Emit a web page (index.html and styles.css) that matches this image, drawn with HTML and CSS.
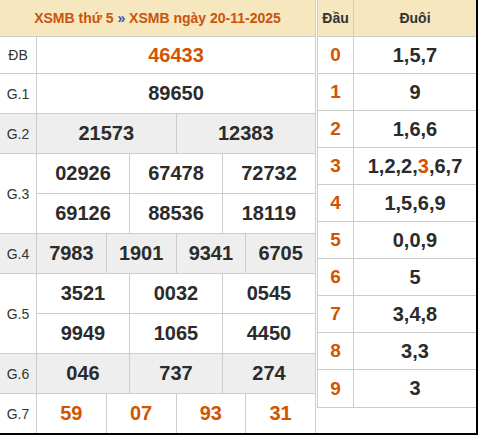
FILE: index.html
```html
<!DOCTYPE html>
<html lang="vi">
<head>
<meta charset="utf-8">
<link rel="stylesheet" href="styles.css">
</head>
<body>
<div class="frame">
  <div class="results">
    <div class="head"><span class="title">XSMB thứ 5 <span class="sep">»</span> XSMB ngày 20-11-2025</span></div>
    <div class="prize p-db">
      <div class="label">ĐB</div>
      <div class="cells c1"><div class="cell red">46433</div></div>
    </div>
    <div class="prize">
      <div class="label">G.1</div>
      <div class="cells c1"><div class="cell">89650</div></div>
    </div>
    <div class="prize alt">
      <div class="label">G.2</div>
      <div class="cells c2"><div class="cell">21573</div><div class="cell">12383</div></div>
    </div>
    <div class="prize">
      <div class="label">G.3</div>
      <div class="cells c3">
        <div class="cell">02926</div><div class="cell">67478</div><div class="cell">72732</div>
        <div class="cell">69126</div><div class="cell">88536</div><div class="cell">18119</div>
      </div>
    </div>
    <div class="prize alt">
      <div class="label">G.4</div>
      <div class="cells c4"><div class="cell">7983</div><div class="cell">1901</div><div class="cell">9341</div><div class="cell">6705</div></div>
    </div>
    <div class="prize">
      <div class="label">G.5</div>
      <div class="cells c3">
        <div class="cell">3521</div><div class="cell">0032</div><div class="cell">0545</div>
        <div class="cell">9949</div><div class="cell">1065</div><div class="cell">4450</div>
      </div>
    </div>
    <div class="prize alt">
      <div class="label">G.6</div>
      <div class="cells c3"><div class="cell">046</div><div class="cell">737</div><div class="cell">274</div></div>
    </div>
    <div class="prize last">
      <div class="label">G.7</div>
      <div class="cells c4"><div class="cell red">59</div><div class="cell red">07</div><div class="cell red">93</div><div class="cell red">31</div></div>
    </div>
  </div>
  <div class="loto">
    <div class="lrow lhead"><div class="dau">Đầu</div><div class="duoi">Đuôi</div></div>
    <div class="lrow"><div class="dau">0</div><div class="duoi">1,5,7</div></div>
    <div class="lrow"><div class="dau">1</div><div class="duoi">9</div></div>
    <div class="lrow"><div class="dau">2</div><div class="duoi">1,6,6</div></div>
    <div class="lrow"><div class="dau">3</div><div class="duoi"><span>1,2,2,<span class="hl">3</span>,6,7</span></div></div>
    <div class="lrow"><div class="dau">4</div><div class="duoi">1,5,6,9</div></div>
    <div class="lrow"><div class="dau">5</div><div class="duoi">0,0,9</div></div>
    <div class="lrow"><div class="dau">6</div><div class="duoi">5</div></div>
    <div class="lrow"><div class="dau">7</div><div class="duoi">3,4,8</div></div>
    <div class="lrow"><div class="dau">8</div><div class="duoi">3,3</div></div>
    <div class="lrow"><div class="dau">9</div><div class="duoi">3</div></div>
  </div>
</div>
</body>
</html>
```

FILE: styles.css
```css
* { box-sizing: border-box; }
html, body { margin: 0; padding: 0; background: #fff; }
body { font-family: "Liberation Sans", Arial, sans-serif; color: #333; }

.frame {
  width: 478px;
  height: 435px;
  border-right: 2px solid #000;
  border-bottom: 2px solid #000;
  display: flex;
  align-items: flex-start;
  gap: 1px;
  overflow: hidden;
}

.results {
  width: 316px;
  border-right: 1px solid #ccc;
  flex: none;
}

.head {
  height: 37px;
  background: #f6e7bf;
  border-bottom: 1px solid #ccc;
  display: flex;
  align-items: center;
  justify-content: center;
  font-weight: bold;
  font-size: 14px;
  color: #c9540e;
}
.head .sep { color: #1f5ea8; }

.prize {
  display: flex;
  border-bottom: 1px solid #ccc;
}
.prize.last { border-bottom: none; }

.label {
  width: 37px;
  flex: none;
  border-right: 1px solid #ccc;
  display: flex;
  align-items: center;
  justify-content: center;
  font-size: 14px;
  color: #333;
  background: #fff;
}
.alt .label { background: #eee; }

.cells {
  flex: 1;
  display: grid;
  gap: 1px;
  background: #ccc;
}
.c1 { grid-template-columns: 1fr; }
.c2 { grid-template-columns: repeat(2, 1fr); }
.c3 { grid-template-columns: repeat(3, 1fr); }
.c4 { grid-template-columns: repeat(4, 1fr); }

.cell {
  height: 39px;
  background: #fff;
  display: flex;
  align-items: center;
  justify-content: center;
  font-weight: bold;
  font-size: 20px;
  color: #2b2b2b;
}
.p-db .cell { height: 36px; }
.alt .cell { background: #eee; }
.cell.red { color: #d35400; }

.loto {
  width: 159px;
  flex: none;
  border-left: 1px solid #ccc;
  border-bottom: 1px solid #ccc;
}
.lrow {
  display: flex;
  height: 37px;
  border-bottom: 1px solid #ccc;
}
.lrow:last-child { border-bottom: none; }
.lrow.lhead { background: #f6e7bf; height: 37px; }
.dau {
  width: 36px;
  flex: none;
  border-right: 1px solid #ccc;
  display: flex;
  align-items: center;
  justify-content: center;
  font-weight: bold;
  font-size: 19px;
  color: #d35400;
}
.duoi {
  flex: 1;
  display: flex;
  align-items: center;
  justify-content: center;
  font-weight: bold;
  font-size: 20px;
  color: #2b2b2b;
}
.lhead .dau, .lhead .duoi { font-size: 14px; color: #333; }
.hl { color: #d35400; }
```
